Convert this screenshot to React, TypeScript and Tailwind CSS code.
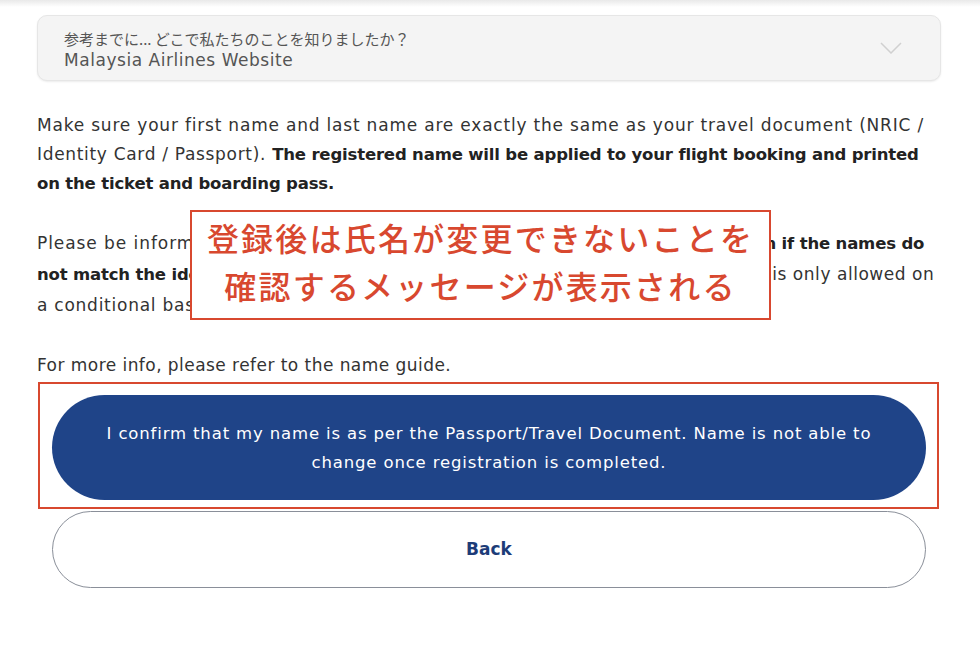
import React from 'react';

const body = { fontFamily: '"DejaVu Sans", "Noto Sans CJK JP", sans-serif' };
const jp = { fontFamily: '"Noto Sans CJK JP", sans-serif' };

function B({ children }: { children: React.ReactNode }) {
  return <b className="font-bold text-[#222] text-[16.5px] tracking-[-0.17px]">{children}</b>;
}

function SourceSelect() {
  return (
    <div className="h-[66px] rounded-[10px] bg-[#f4f4f4] border border-[#e6e6e6] shadow-[0_1px_2px_rgba(0,0,0,0.08)] flex items-center justify-between pl-[26px] pr-[38px]">
      <div className="flex flex-col pt-[3px]">
        <span className="text-[15px] leading-[20px] text-[#555]" style={jp}>
          参考までに... どこで私たちのことを知りましたか？
        </span>
        <span className="text-[17px] leading-[22px] tracking-[0.54px] text-[#555]">Malaysia Airlines Website</span>
      </div>
      <svg width="22" height="12" viewBox="0 0 22 12" fill="none" stroke="#d0d0d0" strokeWidth="1.5">
        <path d="M1 1l10 10L21 1" />
      </svg>
    </div>
  );
}

export default function App() {
  return (
    <div className="w-[980px] h-[656px] bg-white overflow-hidden" style={body}>
      <div className="h-[7px] bg-gradient-to-b from-[#e9e9e9] to-white" />
      <div className="pl-[37px] pr-[39px] pt-[8px]">
        <SourceSelect />

        <div className="relative">
          <div className="text-[17px] text-[#333] whitespace-nowrap">
            <p className="mt-[30px] leading-[29px]">
              <span className="tracking-[0.8px]">
                Make sure your first name and last name are exactly the same as your travel document (NRIC /
              </span>
              <br />
              <span className="tracking-[0.68px]">Identity Card / Passport). </span>
              <B>The registered name will be applied to your flight booking and printed</B>
              <br />
              <B>on the ticket and boarding pass.</B>
            </p>
            <p className="mt-[30px] leading-[30px]">
              <span className="tracking-[0.93px]">Please be informed that you may be denied boarding at the airport </span>
              <B>at check-in if the names do</B>
              <br />
              <B>not match the identification document.</B>
              <span className="tracking-[0.54px]"> Any name amendment after registration is only allowed on</span>
              <br />
              <span className="tracking-[0.75px]">a conditional basis.</span>
            </p>
            <p className="mt-[31px] leading-[29px] tracking-[0.45px]">For more info, please refer to the name guide.</p>
          </div>

          {/* annotation overlay */}
          <div
            className="absolute left-[153px] top-[99px] w-[581px] h-[110px] bg-white border-2 border-[#d8482f] flex flex-col items-center pt-[1px] text-[#d8482f] text-[32px] leading-[48px] font-medium tracking-[2.2px]"
            style={jp}
          >
            <span>登録後は氏名が変更できないことを</span>
            <span>確認するメッセージが表示される</span>
          </div>
        </div>

        <div className="mt-[2px] ml-[1px] mr-[2px] border-2 border-[#d8482f] pl-[12px] pr-[11px] pt-[11px] pb-[7px]">
          <button className="w-full h-[105px] rounded-full bg-[#1f4488] text-white text-[16.5px] leading-[29px] tracking-[0.85px] text-center whitespace-nowrap">
            I confirm that my name is as per the Passport/Travel Document. Name is not able to
            <br />
            change once registration is completed.
          </button>
        </div>

        <div className="px-[15px] mt-[2px]">
          <button className="w-full h-[77px] rounded-full border border-[#8a8f99] bg-white text-[17px] font-bold text-[#1d3c78]">
            Back
          </button>
        </div>
      </div>
    </div>
  );
}
